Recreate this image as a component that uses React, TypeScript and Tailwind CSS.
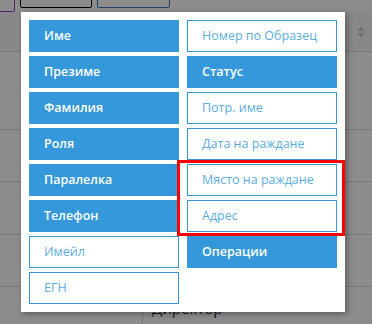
import React from 'react';

const leftCols = [
  { label: 'Име', on: true },
  { label: 'Презиме', on: true },
  { label: 'Фамилия', on: true },
  { label: 'Роля', on: true },
  { label: 'Паралелка', on: true },
  { label: 'Телефон', on: true },
  { label: 'Имейл', on: false },
  { label: 'ЕГН', on: false },
];

const rightCols = [
  { label: 'Номер по Образец', on: false },
  { label: 'Статус', on: true },
  { label: 'Потр. име', on: false },
  { label: 'Дата на раждане', on: false },
  { label: 'Място на раждане', on: false },
  { label: 'Адрес', on: false },
  { label: 'Операции', on: true },
];

const ColumnToggle: React.FC<{ label: string; on: boolean }> = ({ label, on }) => (
  <button
    type="button"
    className={
      on
        ? 'h-8 w-[150px] flex items-center px-3.5 bg-[#3498db] border border-[#3498db] text-white font-semibold text-[12.5px] text-left'
        : 'h-8 w-[150px] flex items-center px-3.5 bg-white border border-[#3498db] text-[#5dade2] text-[12.5px] text-left'
    }
  >
    {label}
  </button>
);

export default function App() {
  return (
    <div className="relative w-[372px] h-[324px] overflow-hidden bg-white" style={{ fontFamily: '"Open Sans", "DejaVu Sans", sans-serif' }}>
      {/* page behind the overlay */}
      <div className="flex flex-col">
        <div className="h-3 flex items-end gap-[5px] pl-0 overflow-hidden">
          <div className="w-[16px] h-8 border border-[#8e44ad] rounded-b-[2px] -ml-[1px]"></div>
          <div className="w-[72px] h-8 border border-black rounded-b-[2px] mb-[4px]"></div>
          <div className="w-[73px] h-8 border border-[#337ab7] rounded-b-[2px] mb-[4px]"></div>
        </div>
        <div className="h-10 bg-[#f7f7f7] border-b border-[#ddd] flex items-center justify-end pr-[6px]">
          <svg width="10" height="14" viewBox="0 0 10 14">
            <path d="M5 1 L9 6 L1 6 Z" fill="#d0d0d0" />
            <path d="M5 13 L9 8 L1 8 Z" fill="#d0d0d0" />
          </svg>
        </div>
        <div className="h-[78px] border-b border-[#ddd]"></div>
        <div className="h-[52px] border-b border-[#ddd]"></div>
        <div className="h-[53px] border-b border-[#ddd]"></div>
        <div className="h-[52px] border-b border-[#ddd]"></div>
        <div className="flex h-[52px]">
          <div className="w-[143px] border-r border-[#ddd]"></div>
          <div className="pl-[9px] pt-[10px] text-[15px] text-[#333]">Директор</div>
        </div>
      </div>

      {/* modal overlay */}
      <div className="absolute inset-0 bg-black/[0.45]"></div>

      {/* column chooser popup */}
      <div className="absolute left-[21px] top-[12px] w-[324px] bg-white p-2 shadow-[2px_2px_6px_rgba(0,0,0,0.35)] flex gap-2">
        <div className="flex flex-col gap-1">
          {leftCols.map((c) => (
            <ColumnToggle key={c.label} label={c.label} on={c.on} />
          ))}
        </div>
        <div className="flex flex-col gap-1">
          {rightCols.map((c) => (
            <ColumnToggle key={c.label} label={c.label} on={c.on} />
          ))}
        </div>
        <div className="absolute left-[156px] top-[148px] w-[168px] h-[76px] border-[3px] border-[#ff0000]"></div>
      </div>
    </div>
  );
}
